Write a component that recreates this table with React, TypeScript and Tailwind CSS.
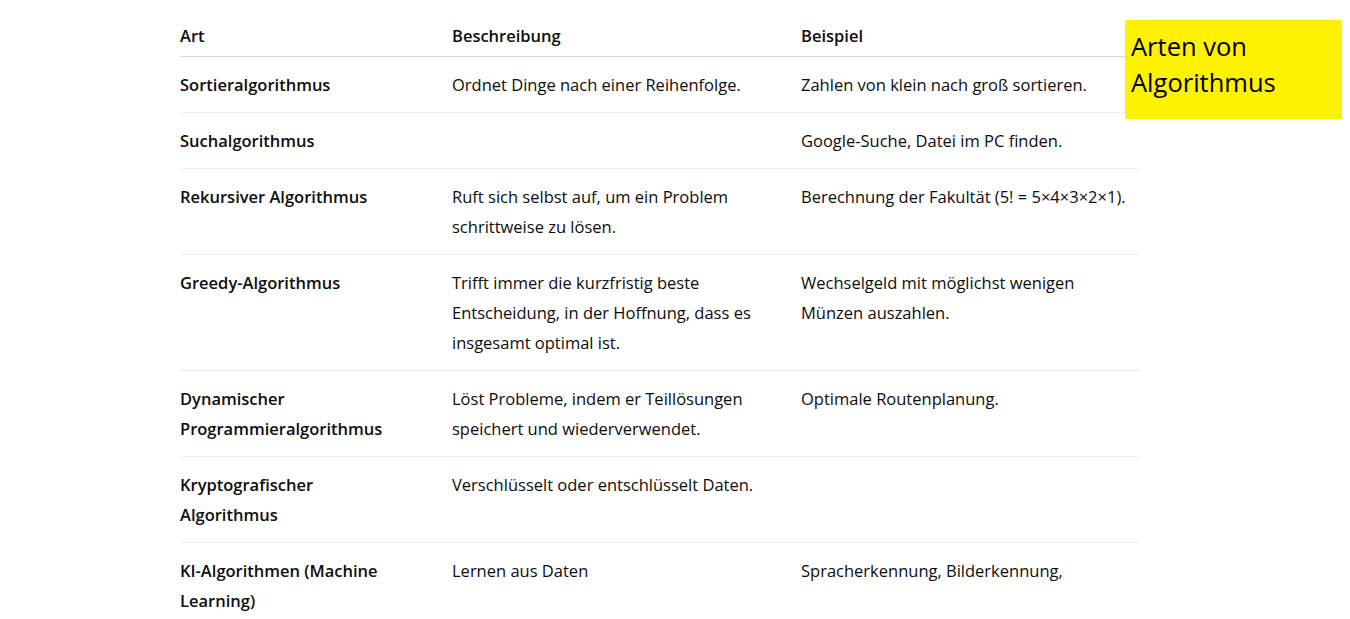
import React from 'react';

type Row = {
  art: React.ReactNode;
  desc: React.ReactNode;
  example: React.ReactNode;
};

const rows: Row[] = [
  {
    art: 'Sortieralgorithmus',
    desc: 'Ordnet Dinge nach einer Reihenfolge.',
    example: 'Zahlen von klein nach groß sortieren.'
  },
  {
    art: 'Suchalgorithmus',
    desc: '',
    example: 'Google-Suche, Datei im PC finden.'
  },
  {
    art: 'Rekursiver Algorithmus',
    desc: <>Ruft sich selbst auf, um ein Problem<br />schrittweise zu lösen.</>,
    example: 'Berechnung der Fakultät (5! = 5×4×3×2×1).'
  },
  {
    art: 'Greedy-Algorithmus',
    desc: (
      <>
        Trifft immer die kurzfristig beste
        <br />
        Entscheidung, in der Hoffnung, dass es
        <br />
        insgesamt optimal ist.
      </>
    ),
    example: <>Wechselgeld mit möglichst wenigen<br />Münzen auszahlen.</>
  },
  {
    art: <>Dynamischer<br />Programmieralgorithmus</>,
    desc: <>Löst Probleme, indem er Teillösungen<br />speichert und wiederverwendet.</>,
    example: 'Optimale Routenplanung.'
  },
  {
    art: <>Kryptografischer<br />Algorithmus</>,
    desc: 'Verschlüsselt oder entschlüsselt Daten.',
    example: ''
  },
  {
    art: <>KI-Algorithmen (Machine<br />Learning)</>,
    desc: 'Lernen aus Daten',
    example: 'Spracherkennung, Bilderkennung,'
  }
];

export default function App() {
  return (
    <div className="relative h-[619px] w-full overflow-hidden bg-white font-['Open_Sans','Noto_Sans',sans-serif] text-[#0d0d0d]">
      {/* Table */}
      <div className="ml-[180px] w-[960px]">
        <table className="w-full table-fixed border-collapse text-left text-[16.5px] leading-[30px]">
          <colgroup>
            <col className="w-[272px]" />
            <col className="w-[349px]" />
            <col className="w-[339px]" />
          </colgroup>
          <thead>
            <tr className="border-b border-[#d9d9d9]">
              <th className="pt-[21px] pb-[5px] font-semibold">Art</th>
              <th className="pt-[21px] pb-[5px] font-semibold">Beschreibung</th>
              <th className="pt-[21px] pb-[5px] font-semibold">Beispiel</th>
            </tr>
          </thead>
          <tbody>
            {rows.map((r, i) =>
            <tr key={i} className="border-b border-[#ececec] align-top">
                <td className="whitespace-nowrap pt-[13px] pb-[12px] font-semibold">{r.art}</td>
                <td className="whitespace-nowrap pt-[13px] pb-[12px]">{r.desc}</td>
                <td className="whitespace-nowrap pt-[13px] pb-[12px]">{r.example}</td>
              </tr>
            )}
          </tbody>
        </table>
      </div>

      {/* Sticky note */}
      <div className="absolute left-[1125px] top-[20px] h-[99px] w-[217px] bg-[#fff200] px-[6px] pt-[8px] text-[25.5px] leading-[36px] text-black">
        Arten von
        <br />
        Algorithmus
      </div>
    </div>);

}
